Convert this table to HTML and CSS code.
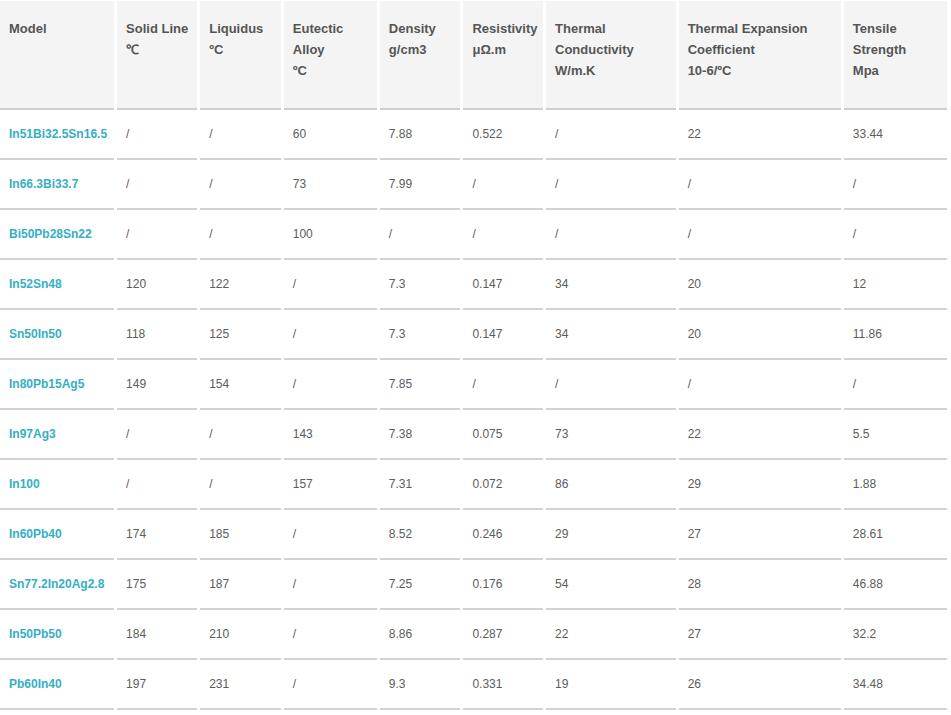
FILE: index.html
```html
<!DOCTYPE html>
<html>
<head>
<meta charset="utf-8">
<link rel="stylesheet" href="styles.css">
</head>
<body>
<table class="spec">
<colgroup>
<col class="c1"><col class="c2"><col class="c3"><col class="c4"><col class="c5"><col class="c6"><col class="c7"><col class="c8"><col class="c9">
</colgroup>
<thead>
<tr>
<th>Model</th>
<th>Solid Line<br>℃</th>
<th>Liquidus<br>ºC</th>
<th>Eutectic<br>Alloy<br>ºC</th>
<th>Density<br>g/cm3</th>
<th>Resistivity<br>μΩ.m</th>
<th>Thermal<br>Conductivity<br>W/m.K</th>
<th>Thermal Expansion<br>Coefficient<br>10-6/ºC</th>
<th>Tensile<br>Strength<br>Mpa</th>
</tr>
</thead>
<tbody>
<tr><td class="model">In51Bi32.5Sn16.5</td><td>/</td><td>/</td><td>60</td><td>7.88</td><td>0.522</td><td>/</td><td>22</td><td>33.44</td></tr>
<tr><td class="model">In66.3Bi33.7</td><td>/</td><td>/</td><td>73</td><td>7.99</td><td>/</td><td>/</td><td>/</td><td>/</td></tr>
<tr><td class="model">Bi50Pb28Sn22</td><td>/</td><td>/</td><td>100</td><td>/</td><td>/</td><td>/</td><td>/</td><td>/</td></tr>
<tr><td class="model">In52Sn48</td><td>120</td><td>122</td><td>/</td><td>7.3</td><td>0.147</td><td>34</td><td>20</td><td>12</td></tr>
<tr><td class="model">Sn50In50</td><td>118</td><td>125</td><td>/</td><td>7.3</td><td>0.147</td><td>34</td><td>20</td><td>11.86</td></tr>
<tr><td class="model">In80Pb15Ag5</td><td>149</td><td>154</td><td>/</td><td>7.85</td><td>/</td><td>/</td><td>/</td><td>/</td></tr>
<tr><td class="model">In97Ag3</td><td>/</td><td>/</td><td>143</td><td>7.38</td><td>0.075</td><td>73</td><td>22</td><td>5.5</td></tr>
<tr><td class="model">In100</td><td>/</td><td>/</td><td>157</td><td>7.31</td><td>0.072</td><td>86</td><td>29</td><td>1.88</td></tr>
<tr><td class="model">In60Pb40</td><td>174</td><td>185</td><td>/</td><td>8.52</td><td>0.246</td><td>29</td><td>27</td><td>28.61</td></tr>
<tr><td class="model">Sn77.2In20Ag2.8</td><td>175</td><td>187</td><td>/</td><td>7.25</td><td>0.176</td><td>54</td><td>28</td><td>46.88</td></tr>
<tr><td class="model">In50Pb50</td><td>184</td><td>210</td><td>/</td><td>8.86</td><td>0.287</td><td>22</td><td>27</td><td>32.2</td></tr>
<tr><td class="model">Pb60In40</td><td>197</td><td>231</td><td>/</td><td>9.3</td><td>0.331</td><td>19</td><td>26</td><td>34.48</td></tr>
</tbody>
</table>
</body>
</html>
```
FILE: styles.css
```css
html, body {
  margin: 0;
  padding: 0;
  background: #fff;
}
body {
  font-family: "Liberation Sans", Arial, sans-serif;
  color: #555;
}
.spec {
  border-collapse: separate;
  border-spacing: 3px 0;
  table-layout: fixed;
  width: 953px;
  margin: 1px 0 0 -3px;
}
.c1 { width: 114px; }
.c2 { width: 80px; }
.c3 { width: 80.5px; }
.c4 { width: 93px; }
.c5 { width: 80.5px; }
.c6 { width: 79.5px; }
.c7 { width: 129.5px; }
.c8 { width: 162px; }
.c9 { width: 103px; }
.spec th {
  background: #f4f4f4;
  text-align: left;
  vertical-align: top;
  font-size: 13px;
  font-weight: bold;
  line-height: 21px;
  color: #555;
  height: 109px;
  box-sizing: border-box;
  padding: 17px 0 0 9px;
  border-bottom: 2px solid #cfcfcf;
  white-space: nowrap;
}
.spec td {
  height: 50px;
  box-sizing: border-box;
  padding: 0 0 0 9px;
  vertical-align: middle;
  font-size: 12px;
  color: #5c5c5c;
  border-bottom: 2px solid #d2d2d2;
  white-space: nowrap;
}
.spec td.model {
  color: #35afc4;
  font-weight: bold;
}
```
